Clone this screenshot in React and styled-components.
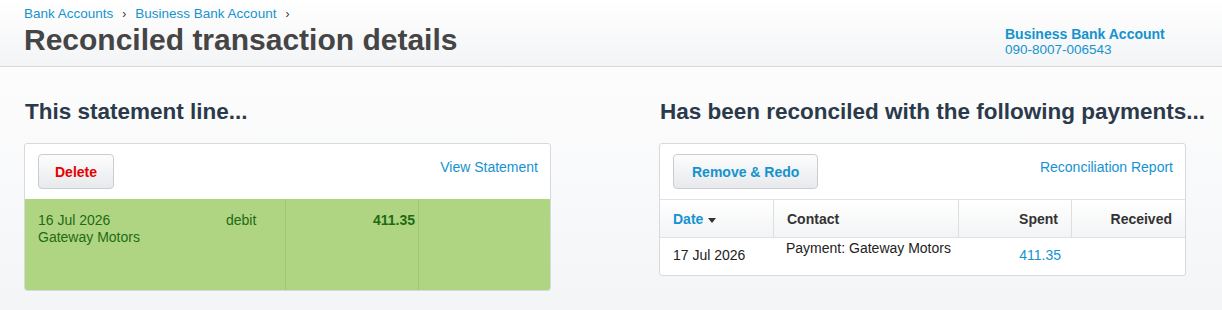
import React from 'react';
import styled, { createGlobalStyle } from 'styled-components';

const GlobalStyle = createGlobalStyle`
  html, body {
    margin: 0;
    padding: 0;
  }
  body {
    font-family: "Liberation Sans", Arial, sans-serif;
    font-size: 14px;
    color: #222;
    background: linear-gradient(#ffffff, #f4f5f7) no-repeat;
    min-height: 310px;
  }
`;

const blue = '#1593ce';

const Header = styled.header`
  display: flex;
  justify-content: space-between;
  height: 66px;
  padding: 0 37px 0 24px;
  background: linear-gradient(#ffffff, #f3f4f6);
  border-bottom: 1px solid #d2d8de;
`;

const Breadcrumb = styled.nav`
  margin-top: 6px;
  font-size: 13.5px;
  line-height: 16px;
  color: ${blue};
  display: flex;
  align-items: center;
  gap: 9px;
`;

const Crumb = styled.a`
  color: ${blue};
  text-decoration: none;
`;

const Sep = styled.span`
  color: #333;
  font-size: 12px;
`;

const Title = styled.h1`
  margin: 0;
  font-size: 30px;
  line-height: 35px;
  font-weight: bold;
  color: #454545;
  white-space: nowrap;
`;

const Account = styled.div`
  width: 180px;
  padding-top: 26px;
  font-size: 13.5px;
  line-height: 16px;
  color: ${blue};
`;

const AccountName = styled.div`
  font-size: 14px;
  font-weight: bold;
`;

const Main = styled.main`
  display: grid;
  grid-template-columns: 527px 527px;
  column-gap: 108px;
  padding: 32px 37px 0 24px;
`;

const Heading = styled.h2`
  margin: 0 0 18px 1px;
  font-size: 22.5px;
  line-height: 26px;
  font-weight: bold;
  color: #2b3a4a;
  white-space: nowrap;
`;

const Panel = styled.div`
  border: 1px solid #d6dade;
  border-radius: 3px;
  background: #fff;
  overflow: hidden;
`;

const Toolbar = styled.div`
  display: flex;
  justify-content: space-between;
  align-items: flex-start;
  padding: 10px 12px 10px 13px;
`;

const Button = styled.button`
  height: 35px;
  padding: 0 ${p => (p.$danger ? '16px' : '18px')};
  border: 1px solid #c9cdd2;
  border-radius: 4px;
  background: linear-gradient(#fdfdfd, #e7e9ec);
  font-family: inherit;
  font-size: 14px;
  font-weight: bold;
  color: ${p => (p.$danger ? '#e60000' : blue)};
  cursor: pointer;
`;

const Link = styled.a`
  margin-top: 5px;
  font-size: 14px;
  line-height: 16px;
  color: ${blue};
  text-decoration: none;
`;

const StatementLine = styled.div`
  display: grid;
  grid-template-columns: 260px 133px 1fr;
  height: 91px;
  background: #afd583;
  color: #1f6b12;
  line-height: 17px;
`;

const LineCell = styled.div`
  padding: 13px 3px 0 13px;
  border-left: ${p => (p.$first ? 'none' : '1px solid #9fc872')};
  text-align: ${p => (p.$right ? 'right' : 'left')};
  font-weight: ${p => (p.$bold ? 'bold' : 'normal')};
`;

const Description = styled.div`
  display: grid;
  grid-template-columns: 188px auto;
`;

const Table = styled.div`
  display: grid;
  grid-template-columns: 113px 185px 113px 1fr;
`;

const Th = styled.div`
  height: 37px;
  display: flex;
  align-items: center;
  justify-content: ${p => (p.$right ? 'flex-end' : 'flex-start')};
  gap: 5px;
  padding: 0 13px;
  background: linear-gradient(#ffffff, #f3f4f6);
  border-top: 1px solid #dfe2e5;
  border-bottom: 1px solid #dfe2e5;
  border-left: ${p => (p.$first ? 'none' : '1px solid #dcdfe2')};
  font-weight: bold;
  color: ${p => (p.$active ? blue : '#333')};
`;

const Caret = styled.span`
  width: 0;
  height: 0;
  margin-top: 3px;
  border-left: 4px solid transparent;
  border-right: 4px solid transparent;
  border-top: 5px solid #333;
`;

const Td = styled.div`
  height: 35px;
  display: flex;
  align-items: ${p => (p.$top ? 'flex-start' : 'center')};
  justify-content: ${p => (p.$right ? 'flex-end' : 'flex-start')};
  padding: ${p => (p.$top ? '2px' : '0')} ${p => (p.$right ? '10px' : '0')} 0 13px;
  line-height: 17px;
  white-space: nowrap;
  color: ${p => (p.$link ? blue : '#222')};
`;

export default function App() {
  return (
    <>
      <GlobalStyle />
      <Header>
        <div>
          <Breadcrumb>
            <Crumb href="#">Bank Accounts</Crumb>
            <Sep>›</Sep>
            <Crumb href="#">Business Bank Account</Crumb>
            <Sep>›</Sep>
          </Breadcrumb>
          <Title>Reconciled transaction details</Title>
        </div>
        <Account>
          <AccountName>Business Bank Account</AccountName>
          <div>090-8007-006543</div>
        </Account>
      </Header>

      <Main>
        <section>
          <Heading>This statement line...</Heading>
          <Panel>
            <Toolbar>
              <Button $danger>Delete</Button>
              <Link href="#">View Statement</Link>
            </Toolbar>
            <StatementLine>
              <LineCell $first>
                <Description>
                  <div>
                    16 Jul 2026
                    <br />
                    Gateway Motors
                  </div>
                  <div>debit</div>
                </Description>
              </LineCell>
              <LineCell $right $bold>411.35</LineCell>
              <LineCell />
            </StatementLine>
          </Panel>
        </section>

        <section>
          <Heading>Has been reconciled with the following payments...</Heading>
          <Panel>
            <Toolbar>
              <Button>Remove &amp; Redo</Button>
              <Link href="#">Reconciliation Report</Link>
            </Toolbar>
            <Table>
              <Th $first $active>
                Date <Caret />
              </Th>
              <Th>Contact</Th>
              <Th $right>Spent</Th>
              <Th $right>Received</Th>
              <Td>17 Jul 2026</Td>
              <Td $top>Payment: Gateway Motors</Td>
              <Td $right $link>411.35</Td>
              <Td $right />
            </Table>
          </Panel>
        </section>
      </Main>
    </>
  );
}
